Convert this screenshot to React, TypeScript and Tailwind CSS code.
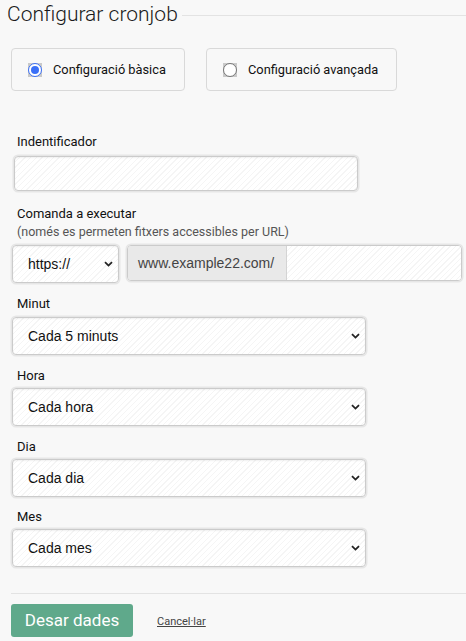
import React from "react";

const stripes =
  "bg-[repeating-linear-gradient(135deg,#ffffff_0px,#ffffff_3px,#f5f5f5_3px,#f5f5f5_4px)]";
const fieldBorder =
  "border border-[#cbcbcb] shadow-[0_0_0_1.5px_#e6e6e6,inset_0_1px_2px_rgba(0,0,0,0.06)]";

function Chevron() {
  return (
    <svg width="9" height="6" viewBox="0 0 9 6" className="shrink-0">
      <path d="M1 1.2 L4.5 4.6 L8 1.2" fill="none" stroke="#222" strokeWidth="1.8" />
    </svg>
  );
}

function Select({ value, className = "" }: { value: string; className?: string }) {
  return (
    <div
      className={`flex h-[38px] items-center justify-between rounded-[4px] pl-[15px] pr-[5px] text-[14px] text-[#111] ${stripes} ${fieldBorder} ${className}`}
      style={{ fontFamily: '"Liberation Sans", Arial, sans-serif' }}
    >
      <span>{value}</span>
      <Chevron />
    </div>
  );
}

function Label({ children, className = "" }: { children: React.ReactNode; className?: string }) {
  return (
    <div className={`ml-[17px] text-[13px] leading-[16px] text-[#111] ${className}`}>{children}</div>
  );
}

function Radio({ checked }: { checked?: boolean }) {
  return (
    <div className="flex h-[14px] w-[14px] shrink-0 items-center justify-center bg-[#c9c9c9]">
      {checked ? (
        <div className="flex h-[14px] w-[14px] items-center justify-center rounded-full border-[1.5px] border-[#3a6ff7] bg-white">
          <div className="h-[8px] w-[8px] rounded-full bg-[#3a6ff7]" />
        </div>
      ) : (
        <div className="h-[14px] w-[14px] rounded-full border border-[#767676] bg-white" />
      )}
    </div>
  );
}

export default function App() {
  return (
    <div
      className="min-h-[641px] w-[466px] bg-[#f8f8f8] pt-[2px]"
      style={{ fontFamily: 'Roboto, "Liberation Sans", sans-serif' }}
    >
      <div className="flex items-center pl-[7px]">
        <div className="text-[21px] font-light leading-[24px] text-[#1a1a1a]">Configurar cronjob</div>
        <div className="ml-[4px] mt-[2px] h-px flex-1 bg-[#e3e3e3]" />
      </div>

      <div className="ml-[11px] mt-[22px] flex gap-[21px]">
        <div className="flex h-[43px] w-[174px] items-center gap-[11px] rounded-[4px] border border-[#d9d9d9] pl-[16px] text-[12.8px] text-[#111]">
          <Radio checked />
          <span>Configuració bàsica</span>
        </div>
        <div className="flex h-[43px] w-[191px] items-center gap-[11px] rounded-[4px] border border-[#d9d9d9] pl-[16px] text-[12.8px] text-[#111]">
          <Radio />
          <span>Configuració avançada</span>
        </div>
      </div>

      <Label className="mt-[43px]">Indentificador</Label>
      <div className={`ml-[14px] mt-[6px] h-[35px] w-[344px] rounded-[4px] ${stripes} ${fieldBorder}`} />

      <Label className="mt-[15px]">Comanda a executar</Label>
      <div className="ml-[17px] mt-[2px] text-[12.5px] leading-[16px] text-[#555]">
        (només es permeten fitxers accessibles per URL)
      </div>
      <div className="ml-[12px] mt-[5px] flex items-start gap-[8px]">
        <Select value="https://" className="w-[107px]" />
        <div
          className={`flex h-[36px] w-[335px] overflow-hidden rounded-[4px] ${fieldBorder}`}
          style={{ fontFamily: '"Liberation Sans", Arial, sans-serif' }}
        >
          <div className="flex w-[159px] items-center border-r border-[#d4d4d4] bg-[#e9e9e9] pl-[10px] text-[14px] text-[#444]">
            www.example22.com/
          </div>
          <div className={`flex-1 ${stripes}`} />
        </div>
      </div>

      <Label className="mt-[13px]">Minut</Label>
      <Select value="Cada 5 minuts" className="ml-[12px] mt-[5px] w-[354px]" />

      <Label className="mt-[13px]">Hora</Label>
      <Select value="Cada hora" className="ml-[12px] mt-[4px] w-[354px]" />

      <Label className="mt-[13px]">Dia</Label>
      <Select value="Cada dia" className="ml-[12px] mt-[4px] w-[354px]" />

      <Label className="mt-[12px]">Mes</Label>
      <Select value="Cada mes" className="ml-[12px] mt-[4px] w-[354px]" />

      <div className="ml-[11px] mt-[26px] h-px bg-[#e3e3e3]" />

      <div className="ml-[11px] mt-[10px] flex items-center">
        <button className="h-[33px] w-[122px] rounded-[3px] bg-[#5fa98b] text-[17px] text-white">
          Desar dades
        </button>
        <a className="ml-[24px] mt-[3px] text-[11px] text-[#444] underline">Cancel·lar</a>
      </div>
    </div>
  );
}
